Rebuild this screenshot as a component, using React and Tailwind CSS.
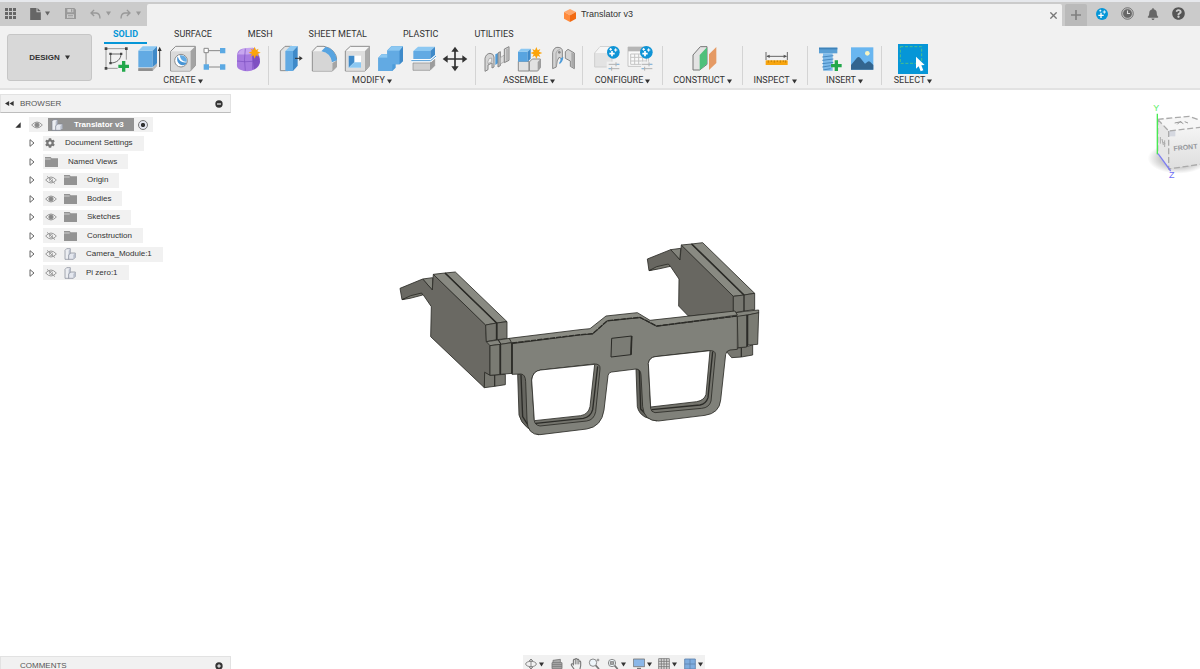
import React, { useState } from "react";
import { FaBell, FaQuestionCircle, FaCog, FaRegHandPaper } from "react-icons/fa";

const tabs = ["SOLID", "SURFACE", "MESH", "SHEET METAL", "PLASTIC", "UTILITIES"];

const Caret = () => (
  <svg viewBox="0 0 10 10" className="w-[5px] h-[5px]" fill="currentColor" aria-hidden="true">
    <path d="M0 1h10L5 9z" />
  </svg>
);

const Icon = ({ children }) => (
  <svg viewBox="0 0 84 84" className="w-7 h-7" fill="none" strokeLinejoin="round">
    {children}
  </svg>
);

const Star = ({ x, y }) => (
  <path
    transform={`translate(${x} ${y})`}
    d="M0-18L4-8 12-12 8-4 18 0 8 4 12 12 4 8 0 18-4 8-12 12-8 4-18 0-8-4-12-12-4-8z"
    fill="#fba40a"
  />
);

const GreenPlus = ({ x, y }) => (
  <path
    transform={`translate(${x} ${y})`}
    d="M-5-16H5V-5H16V5H5V16H-5V5H-16V-5H-5z"
    fill="#22a84b"
  />
);

/* ---------- Create ---------- */
const SketchIcon = () => (
  <Icon>
    <path d="M9 11H70M9 11V70M70 11V44M9 70H44" stroke="#999" strokeWidth="3" />
    <path d="M23 54V27H54C54 42 42 54 23 54z" stroke="#666" strokeWidth="3" />
    <path d="M5 7h8v8H5zM66 7h8v8h-8zM5 66h8v8H5zM19 23h7v7h-7zM51 23h7v7h-7zM19 51h7v7h-7z" fill="#444" />
    <GreenPlus x={62} y={64} />
  </Icon>
);
const ExtrudeIcon = () => (
  <Icon>
    <path d="M7 68L50 68 63 55V64L50 78H7z" fill="#b9b9b9" />
    <path d="M7 70H50V78H7z" fill="#8f8f8f" />
    <path d="M7 17H50V67H7z" fill="#62aae3" />
    <path d="M7 17L20 4H63L50 17z" fill="#8cc8f2" />
    <path d="M50 17L63 4V55L50 67z" fill="#3f8ac9" />
    <path d="M71 66V14" stroke="#444" strokeWidth="3" />
    <path d="M65 18L71 5 77 18z" fill="#333" />
  </Icon>
);
const HoleIcon = () => (
  <Icon>
    <path d="M5 19L20 4H79V62L64 78H5z" fill="#f0f0f0" stroke="#8c8c8c" strokeWidth="3" />
    <path d="M64 19L79 4V62L64 78z" fill="#a3a3a3" />
    <path d="M7 19H64V77H7z" fill="#dadada" />
    <circle cx="36" cy="47" r="19" fill="#fff" stroke="#8c8c8c" strokeWidth="3" />
    <path d="M26 34C20 50 32 64 46 60Q52 58 53 52Q32 56 26 34z" fill="#4794d4" />
    <path d="M32 31C46 28 56 40 53 50Q36 52 32 31z" fill="#62aae3" />
  </Icon>
);
const PatternIcon = () => (
  <Icon>
    <path d="M19 17H54M12 24V60M19 66H54" stroke="#888" strokeWidth="3" />
    <path d="M6 10H19V23H6z" fill="#fff" stroke="#888" strokeWidth="3" />
    <path d="M54 9H70V25H54zM5 58H21V74H5zM54 58H70V74H54z" fill="#5ba9e3" />
  </Icon>
);
const FormIcon = () => (
  <Icon>
    <path d="M6 32Q6 15 22 11L54 8Q72 20 74 40V54Q72 66 60 72Q40 84 16 74Q4 70 6 56z" fill="#a77be0" />
    <path d="M14 18Q30 6 54 9L50 27Q30 30 8 28z" fill="#c7a6ef" />
    <path d="M52 28Q66 26 72 34L75 50Q72 66 56 74z" fill="#7f50c2" />
    <path d="M31 11Q26 44 31 77M6 48Q30 52 53 49L75 42M53 27V74" stroke="#7a4fc0" strokeWidth="2" />
    <Star x={59} y={23} />
  </Icon>
);

/* ---------- Modify ---------- */
const PressPullIcon = () => (
  <Icon>
    <path d="M13 18L27 4H48L36 18V77H13z" fill="#e2e2e2" stroke="#8c8c8c" strokeWidth="3" />
    <path d="M28 18H51V78H28z" fill="#62aae3" />
    <path d="M28 18L43 3H65L51 18z" fill="#8cc8f2" />
    <path d="M51 18L65 3V62L51 78z" fill="#3f8ac9" />
    <path d="M57 40H72" stroke="#333" strokeWidth="3" />
    <path d="M70 33L80 40 70 47z" fill="#333" />
  </Icon>
);
const FilletIcon = () => (
  <Icon>
    <path d="M10 19L24 4H45Q82 12 84 48V64L70 78H10z" fill="#f4f4f4" stroke="#8c8c8c" strokeWidth="3" />
    <path d="M12 19H34Q68 22 70 54V77H12z" fill="#d6d6d6" />
    <path d="M70 54L84 46V64L70 78z" fill="#a5a5a5" />
    <path d="M37 19L50 5Q80 12 84 46L69 52Q65 24 37 19z" fill="#58a4e0" />
  </Icon>
);
const ShellIcon = () => (
  <Icon>
    <path d="M10 18L25 4H83V62L69 78H10z" fill="#f6f6f6" stroke="#8c8c8c" strokeWidth="3" />
    <path d="M69 18L83 4V62L69 78z" fill="#aaa" />
    <path d="M12 18H69V77H12z" fill="#dedede" />
    <path d="M20 32H57V68H20z" fill="#fff" />
    <path d="M20 32H37V52L20 68z" fill="#3f8ac9" />
    <path d="M20 68L37 52H57V68z" fill="#8cc8f2" />
  </Icon>
);
const CombineIcon = () => (
  <Icon>
    <path d="M10 38L20 28H37V16L49 4H84V48L74 58H62V68L52 78H10z" fill="#4d9bd9" />
    <path d="M10 38H37V17H74V58H52V78H10z" fill="#62aae3" />
    <path d="M37 17L49 4H84L74 17zM10 38L20 28H37V38z" fill="#8cc8f2" />
    <path d="M74 17L84 5V48L74 58z" fill="#3f8ac9" />
  </Icon>
);
const SplitIcon = () => (
  <Icon>
    <path d="M15 54H66L80 42V62L66 76H15z" fill="#cfcfcf" stroke="#8c8c8c" strokeWidth="2" />
    <path d="M66 54L80 42V62L66 76z" fill="#9c9c9c" />
    <path d="M16 18L30 5H81L67 18z" fill="#8cc8f2" />
    <path d="M16 18H67V42H16z" fill="#62aae3" />
    <path d="M67 18L81 5V31L67 42z" fill="#3f8ac9" />
    <path d="M10 47H68L84 33" stroke="#fff" strokeWidth="8" />
    <path d="M10 47H68L84 33" stroke="#4a98d5" strokeWidth="3" />
  </Icon>
);
const MoveIcon = () => (
  <Icon>
    <path d="M42 14V70M14 42H70" stroke="#333" strokeWidth="5" />
    <path d="M42 5L53 20H31zM42 79L53 64H31zM5 42L20 31V53zM79 42L64 31V53z" fill="#333" />
  </Icon>
);

/* ---------- Assemble ---------- */
const JointIcon = () => (
  <Icon>
    <path d="M9 40Q12 26 24 25Q35 26 36 36V66L30 69V54L18 60V74L9 79z" fill="#d4d4d4" stroke="#868686" strokeWidth="3" />
    <path d="M18 49Q19 38 29 39V50L18 56z" fill="#f1f1f1" stroke="#999" strokeWidth="2" />
    <path d="M40 28L49 24V54L40 60z" fill="#4d9bd9" />
    <path d="M48 24L55 20V62L48 66z" fill="#bdbdbd" stroke="#868686" strokeWidth="3" />
    <path d="M55 38L67 30V50L55 57z" fill="#dedede" stroke="#999" strokeWidth="2" />
    <path d="M67 12L81 5V46L67 53z" fill="#d4d4d4" stroke="#868686" strokeWidth="3" />
    <path d="M75 11V47" stroke="#a5a5a5" strokeWidth="4" />
  </Icon>
);
const ComponentIcon = () => (
  <Icon>
    <path d="M10 49H42V78H10zM43 51L52 42H76V68L68 78H43z" fill="#e2e2e2" stroke="#8c8c8c" strokeWidth="3" />
    <path d="M68 51L76 43V68L68 77z" fill="#a0a0a0" />
    <path d="M9 20H38V50H9z" fill="#58a4e0" />
    <path d="M9 20L18 11H47L38 20z" fill="#8cc8f2" />
    <path d="M38 20L47 11V41L38 50z" fill="#3f8ac9" />
    <Star x={64} y={24} />
  </Icon>
);
const AsBuiltIcon = () => (
  <Icon>
    <path d="M14 22Q18 6 30 7Q43 8 43 18V42L33 37Q26 44 25 66L14 71z" fill="#d4d4d4" stroke="#868686" strokeWidth="3" />
    <path d="M24 66V24Q27 13 36 14" stroke="#aaa" strokeWidth="3" />
    <circle cx="34" cy="22" r="4" fill="#888" />
    <path d="M34 58Q45 52 46 36L38 40Q38 48 34 52z" fill="#4d9bd9" />
    <path d="M52 20L60 13 79 24V71L67 64V48L52 40z" fill="#d4d4d4" stroke="#868686" strokeWidth="3" />
    <path d="M70 22L78 26V69L70 64z" fill="#aaa" />
  </Icon>
);

/* ---------- Configure / Construct / Inspect / Insert ---------- */
const BlueBadge = () => (
  <g>
    <circle cx="64" cy="22" r="19" fill="#0f94d6" />
    <path d="M60 18V34M52 26H68" stroke="#fff" strokeWidth="5" />
    <path d="M56 9V17M52 13H60M71 10V20M66 15H76" stroke="#fff" strokeWidth="3" />
  </g>
);
const Sliders = () => (
  <g>
    <path d="M50 58H82M50 71H82M72 52V64M59 65V77" stroke="#b0b0b0" strokeWidth="3" />
    <path d="M74 58H82M50 71H57" stroke="#7db9e4" strokeWidth="3" />
  </g>
);
const ConfigureIcon = () => (
  <Icon>
    <path d="M8 24L24 5H60V66H8z" fill="#e3e3e3" stroke="#cfcfcf" strokeWidth="3" />
    <path d="M10 24L24 6H60L46 24z" fill="#f6f6f6" />
    <path d="M44 50H84V80H44z" fill="#f1f1f1" />
    <Sliders />
    <BlueBadge />
  </Icon>
);
const TableIcon = () => (
  <Icon>
    <path d="M9 6H70V64H9z" fill="#fafafa" stroke="#c4c4c4" strokeWidth="3" />
    <path d="M9 6H60V19H9z" fill="#b5b5b5" />
    <path d="M17 27H64V58H17zM17 37H64M17 48H64M29 27V58M41 27V58M53 27V58" stroke="#c4c4c4" strokeWidth="3" />
    <path d="M48 50H84V80H48z" fill="#f1f1f1" />
    <Sliders />
    <BlueBadge />
  </Icon>
);
const PlaneIcon = () => (
  <Icon>
    <path d="M12 30L34 5H54V58L32 75H12z" fill="#e3e3e3" stroke="#777" strokeWidth="3" />
    <path d="M32 30L54 7V56L32 76z" fill="#4fc07b" />
    <path d="M60 28L82 6V54L60 75z" fill="#e59a64" />
  </Icon>
);
const MeasureIcon = () => (
  <Icon>
    <path d="M15 21V45M79 21V45M18 34H76" stroke="#666" strokeWidth="3" />
    <path d="M16 34L26 29V39zM78 34L68 29V39z" fill="#555" />
    <path d="M14 46H80V60H14z" fill="#f8a50f" />
    <path d="M22 46V53M31 46V51M40 46V53M49 46V51M58 46V53M67 46V51M74 46V53" stroke="#a86f00" strokeWidth="2" />
  </Icon>
);
const BoltIcon = () => (
  <Icon>
    <path d="M15 8H70V25H15z" fill="#5a9fd4" />
    <path d="M15 8H70V13H15z" fill="#3f82b8" />
    <path d="M27 25H56V77H32L27 72z" fill="#7dbaea" />
    <path d="M25 36L58 32M25 46L58 42M25 56L58 52M25 66L50 62M27 75L50 71" stroke="#4789c0" strokeWidth="3" />
    <GreenPlus x={67} y={62} />
  </Icon>
);
const ImageIcon = () => (
  <Icon>
    <path d="M12 7H79V74H12z" fill="#69b6f0" />
    <circle cx="61" cy="25" r="7" fill="#f6f3c2" />
    <path d="M12 60L30 38Q35 34 40 39L54 56 62 50Q66 47 70 51L79 60V74H12z" fill="#33658f" />
  </Icon>
);
const SelectIcon = () => (
  <svg viewBox="0 0 90 90" className="w-[30px] h-[30px]">
    <path d="M0 0H90V90H0z" fill="#0696d7" />
    <path d="M7 8H71V58H7z" fill="none" stroke="#4cc08a" strokeWidth="3" strokeDasharray="9 5" />
    <path d="M54 38V74L62 67 68 82 76 79 70 64 80 63z" fill="#fff" />
  </svg>
);

const groups = [
  { label: "CREATE", width: "w-[171px]", icons: [SketchIcon, ExtrudeIcon, HoleIcon, PatternIcon, FormIcon] },
  { label: "MODIFY", width: "w-[207px]", icons: [PressPullIcon, FilletIcon, ShellIcon, CombineIcon, SplitIcon, MoveIcon] },
  { label: "ASSEMBLE", width: "w-[107px]", icons: [JointIcon, ComponentIcon, AsBuiltIcon] },
  { label: "CONFIGURE", width: "w-[80px]", icons: [ConfigureIcon, TableIcon] },
  { label: "CONSTRUCT", width: "w-[80px]", icons: [PlaneIcon] },
  { label: "INSPECT", width: "w-[65px]", icons: [MeasureIcon] },
  { label: "INSERT", width: "w-[74px]", icons: [BoltIcon, ImageIcon] },
  { label: "SELECT", width: "w-[62px]", icons: [SelectIcon] },
];

/* ---------- Browser tree ---------- */
const Eye = ({ off }) => (
  <svg viewBox="0 0 36 24" className="w-3 h-2 shrink-0" fill="none">
    <path d="M2 12Q18-6 34 12Q18 30 2 12z" stroke="#999" strokeWidth="3" />
    <circle cx="18" cy="12" r={off ? 5 : 7} fill={off ? "none" : "#888"} stroke="#999" strokeWidth="2" />
    {off && <path d="M6 1L30 23" stroke="#999" strokeWidth="3" />}
  </svg>
);
const Folder = () => (
  <svg viewBox="0 0 39 30" className="w-[13px] h-[10px] shrink-0" fill="#939393">
    <path d="M0 0H17L20 4H39V30H0z" />
    <path d="M0 6H17" stroke="#f1f1f1" strokeWidth="2" />
  </svg>
);
const Parts = () => (
  <svg viewBox="0 0 36 36" className="w-3 h-3 shrink-0" stroke="#7b8290" strokeWidth="2" strokeLinejoin="round">
    <path d="M3 7L8 2H19V28L14 34H3z" fill="#eceef2" />
    <path d="M14 8L19 3V28L14 33z" fill="#b9bfcc" stroke="none" />
    <path d="M14 21L20 15H34V28L28 34H14z" fill="#e4e7ee" />
    <path d="M28 21L34 15V28L28 34z" fill="#b9bfcc" stroke="none" />
  </svg>
);

const rows = [
  { label: "Document Settings", icon: "gear" },
  { label: "Named Views", icon: "folder" },
  { label: "Origin", icon: "folder", eye: "off" },
  { label: "Bodies", icon: "folder", eye: "on" },
  { label: "Sketches", icon: "folder", eye: "on" },
  { label: "Construction", icon: "folder", eye: "off" },
  { label: "Camera_Module:1", icon: "parts", eye: "off" },
  { label: "Pi zero:1", icon: "parts", eye: "off" },
];

const TreeRow = ({ row }) => (
  <li className="flex items-center h-[15px] pl-[29px]">
    <button aria-label={`Expand ${row.label}`} className="w-[14px] shrink-0">
      <svg viewBox="0 0 18 24" className="w-[6px] h-2" fill="#fff" stroke="#666" strokeWidth="3">
        <path d="M3 2L15 12 3 22z" />
      </svg>
    </button>
    <div className="flex items-center h-[15px] bg-[#f1f1f1] pl-[2px] pr-[11px]">
      {row.eye && (
        <button aria-label={`Toggle ${row.label}`} className="w-[19px] shrink-0">
          <Eye off={row.eye === "off"} />
        </button>
      )}
      {row.icon === "gear" && <FaCog className="w-[10px] h-[10px] text-[#777]" />}
      {row.icon === "folder" && <Folder />}
      {row.icon === "parts" && <Parts />}
      <span className="pl-[10px] whitespace-nowrap">{row.label}</span>
    </div>
  </li>
);

const PanelHeader = ({ title, arrows, children }) => (
  <div className="flex items-center w-[231px] h-[19px] pl-[4px] pr-[7px] bg-[#f1f1f1] border border-[#e2e2e2] border-b-[#bdbdbd] text-[#555]">
    <span className="w-[15px]">
      {arrows && (
        <svg viewBox="0 0 26 14" className="w-[9px] h-[5px]" fill="#333">
          <path d="M12 0V14L0 7zM25 0V14L13 7z" />
        </svg>
      )}
    </span>
    <h2 className="flex-1">{title}</h2>
    {children}
  </div>
);

/* ---------- Viewport drawings ---------- */
const Glasses = () => (
  <svg
    viewBox="0 0 1110 615"
    className="absolute left-[390px] top-[145px] w-[370px] h-[205px]"
    stroke="#2b2b27"
    strokeWidth="2.5"
    strokeLinejoin="round"
    aria-label="Translator v3 model"
  >
    {/* left arm */}
    <path d="M98 132L128 128 127 165z" fill="#84857d" />
    <path d="M30 160L98 132 127 165 130 118 287 270 289 318 300 330V421L284 412 283 458 122 305 124 215 100 180 92 176 36 194z" fill="#6a6963" />
    <path d="M36 194L62 182 95 174 98 180 60 190z" fill="#77776f" />
    <path d="M130 118L165 114 320 264 287 270zM165 114L196 111 351 260 320 264z" fill="#898a82" />
    <path d="M165 114L320 264" strokeWidth="5" />
    <path d="M287 270L320 264V314L289 320zM320 264L351 260V311L320 314z" fill="#777770" />
    <path d="M284 412L300 421 314 420V454L283 458zM314 420L346 418V449L314 454z" fill="#777770" />
    <path d="M289 320L325 315 333 328 300 332zM325 315L358 310 368 322 333 328z" fill="#84857d" />
    <path d="M300 332L331 328V418L300 421zM331 328L366 323V415L331 418z" fill="#7a7b73" />
    <path d="M331 328V418M320 264V314" strokeWidth="5" />

    {/* right arm */}
    <g transform="translate(570 0)">
      <path d="M272 44L302 40 300 75z" fill="#84857d" />
      <path d="M202 72L272 44 300 75 304 30 460 182V232L325 243 296 213 297 132 272 95 265 90 207 107z" fill="#686761" />
      <path d="M207 107L230 95 265 87 271 94 235 102z" fill="#77776f" />
      <path d="M304 30L335 27 492 180 460 184zM335 27L368 23 524 175 492 180z" fill="#898a82" />
      <path d="M335 27L492 180" strokeWidth="5" />
      <path d="M460 184L492 180V228L460 234zM492 180L524 175V224L492 228z" fill="#777770" />
      <path d="M438 348L455 368 484 366V338L455 340zM484 366L518 360V330L484 338z" fill="#777770" />
      <path d="M462 234L495 229 536 225V234L503 240 472 246z" fill="#84857d" />
    </g>

    {/* depth edges behind the frame */}
    <path d="M383 418L387 540Q392 562 412 578L445 600 430 560 410 430 400 416z" fill="#65655f" />
    <path d="M738 402L742 515Q746 535 765 546L800 558 780 520 762 410z" fill="#65655f" />
    <path d="M393 420L398 545L425 588M748 405L752 522L780 550" fill="none" strokeWidth="4" />

    {/* front frame */}
    <path d="M358 310L570 284 600 281 648 243 742 233 780 256 1035 228 1042 240 800 274 750 248 652 258 608 297 366 326z" fill="#8b8c84" />
    <path
      d="M366 326L570 300 608 297 652 258 750 248 800 274 1042 243V343L1020 345Q1008 348 1007 358L992 495Q988 535 945 541L805 558Q762 558 758 515L753 420Q752 402 738 402L665 411Q655 412 654 422L642 525Q635 575 590 582L450 599Q412 600 411 555L407 440Q406 418 393 417L366 418z"
      fill="#80817a"
    />
    <path d="M366 324L570 299 608 296 652 257 750 247 800 273 1040 243" fill="none" strokeWidth="4" strokeDasharray="16 3" />
    <path d="M425 435Q428 408 452 405L612 387Q632 386 630 402L617 530Q612 555 590 558L450 573Q433 570 433 555z" fill="#74746d" />
    <path d="M623 394L608 524Q602 546 580 550L437 565" fill="none" strokeWidth="4" />
    <path d="M425 435Q428 408 452 405L614 388 600 515Q595 538 572 542L433 557z" fill="#fff" />
    <path d="M775 385Q778 368 795 365L955 347Q978 345 976 360L963 498Q958 518 935 520L795 533Q783 531 782 520z" fill="#74746d" />
    <path d="M968 350L954 488Q948 507 930 510L785 524" fill="none" strokeWidth="4" />
    <path d="M775 385Q778 368 795 365L960 347 948 478Q943 496 920 500L782 516z" fill="#fff" />
    <path d="M665 310L725 303 723 359 663 366z" fill="#7b7c75" strokeWidth="3" />
    <path d="M725 303L723 359" fill="none" strokeWidth="5" />
    <path d="M1042 244L1070 240V336L1044 338zM1073 240L1106 233 1103 328 1073 330z" fill="#7a7b73" />
    <path d="M1072 239V334M366 324V416" strokeWidth="5" />
  </svg>
);

const ViewCube = () => (
  <svg viewBox="0 0 180 270" className="absolute right-0 top-[5px] w-[60px] h-[90px]" fill="none">
    <defs>
      <radialGradient id="shade">
        <stop offset="0.6" stopColor="#999" stopOpacity="0.5" />
        <stop offset="1" stopColor="#999" stopOpacity="0" />
      </radialGradient>
      <linearGradient id="face" x2="0" y2="1">
        <stop stopColor="#f4f4f4" />
        <stop offset="1" stopColor="#dedede" />
      </linearGradient>
    </defs>
    <ellipse cx="115" cy="190" rx="92" ry="46" fill="url(#shade)" />
    <path d="M53 73L148 64 180 76V97L86 108z" fill="#f6f6f6" />
    <path d="M53 73L86 108V222L53 178z" fill="#e6e6e6" />
    <path d="M86 108L180 97V208L86 222z" fill="url(#face)" />
    <path d="M86 106H106V124H86z" fill="#d5d8e0" />
    <path d="M53 73L148 64 180 76M53 73L86 108 180 97M86 108V222L180 208M53 73V178" stroke="#aaa" strokeWidth="4" strokeDasharray="18 8" />
    <path d="M104 84L124 80M112 88L120 80 130 86M134 80L144 84" stroke="#999" strokeWidth="3" />
    <path d="M61 126V146M66 132L70 150M74 136V156M68 142L76 146" stroke="#aaa" strokeWidth="3" />
    <path d="M52 56V178" stroke="#48ea52" strokeWidth="4" />
    <path d="M54 176L92 228" stroke="#7d7df0" strokeWidth="4" />
    <text x="101" y="168" transform="rotate(-6 101 168)" fontSize="21" fontWeight="bold" fill="#97999e">FRONT</text>
    <text x="40" y="49" fontSize="27" fill="#5cf066">Y</text>
    <text x="87" y="249" fontSize="27" fill="#6f6ff5">Z</text>
  </svg>
);

/* ---------- Navigation bar ---------- */
const NavIcon = ({ children }) => (
  <svg viewBox="0 0 36 36" className="w-3 h-3" fill="none" stroke="#777" strokeWidth="2.5">
    {children}
  </svg>
);
const navTools = [
  { name: "Orbit", caret: true, art: <><ellipse cx="18" cy="18" rx="16" ry="8" /><path d="M18 3V33M12 9L18 3 24 9M12 27L18 33 24 27" /></> },
  { name: "Look at", art: <path d="M3 14H33V32H3zM6 14V7L28 4V14M3 20H33M3 26H33" fill="#aaa" /> },
  { name: "Pan", hand: true },
  { name: "Zoom", art: <><circle cx="15" cy="14" r="11" fill="#eef6fa" /><path d="M23 22L33 33" strokeWidth="5" /><path d="M30 2V10M26 6H34" /></> },
  { name: "Fit", caret: true, art: <><circle cx="15" cy="15" r="11" fill="#eef6fa" /><path d="M23 23L32 33" strokeWidth="5" /><path d="M10 11H20V19H10z" fill="#aaa" /></> },
  { name: "Display Settings", caret: true, art: <><path d="M1 3H35V26H1z" fill="#8bb7e8" /><path d="M12 32H24" strokeWidth="5" /></> },
  { name: "Grid and Snaps", caret: true, art: <path d="M2 2H34V34H2zM2 10H34M2 18H34M2 26H34M10 2V34M18 2V34M26 2V34" fill="#ddd" /> },
  { name: "Viewports", caret: true, art: <path d="M2 3H34V33H2zM18 3V33M2 18H34" fill="#7faddf" stroke="#5f82ad" /> },
];

const App = () => {
  const [activeTab, setActiveTab] = useState("SOLID");

  return (
    <div className="flex flex-col h-screen overflow-hidden bg-white text-[#333] text-[8px] font-['Liberation_Sans',Arial,sans-serif]">
      {/* Title bar */}
      <header className="flex h-[26px] shrink-0 pt-[2px] bg-[#cbcbcb] border-t-2 border-[#e6e8ec] text-[#666]">
        <div className="flex items-center w-[147px] pl-[5px] pb-[3px]">
          <button aria-label="Data panel" className="mr-[14px]">
            <svg viewBox="0 0 33 33" className="w-[11px] h-[11px]" fill="currentColor">
              <path d="M0 0h9v9H0zM12 0h9v9h-9zM24 0h9v9h-9zM0 12h9v9H0zM12 12h9v9h-9zM24 12h9v9h-9zM0 24h9v9H0zM12 24h9v9h-9zM24 24h9v9h-9z" />
            </svg>
          </button>
          <button aria-label="File" className="flex items-center gap-[4px] mr-[15px]">
            <svg viewBox="0 0 32 36" className="w-[11px] h-3" fill="currentColor">
              <path d="M0 0H19V13H32V36H0zM22 0L32 10H22z" />
            </svg>
            <Caret />
          </button>
          <button aria-label="Save" className="mr-[14px] text-[#999]">
            <svg viewBox="0 0 33 33" className="w-[11px] h-[11px]" fill="currentColor">
              <path d="M0 0H28L33 5V33H0zM7 3V13H25V3zM6 19V30H27V19z" fillRule="evenodd" />
              <path d="M18 4H22V11H18zM9 22H24V24H9zM9 26H24V28H9z" />
            </svg>
          </button>
          <button aria-label="Undo" className="flex items-center gap-[5px] mr-[9px] text-[#999]">
            <svg viewBox="0 0 32 28" className="w-[11px] h-[10px]" fill="none" stroke="currentColor" strokeWidth="4">
              <path d="M12 2L3 11 12 20M3 11H18Q29 12 29 27" />
            </svg>
            <Caret />
          </button>
          <button aria-label="Redo" className="flex items-center gap-[5px] text-[#999]">
            <svg viewBox="0 0 32 28" className="w-[11px] h-[10px]" fill="none" stroke="currentColor" strokeWidth="4">
              <path d="M20 2L29 11 20 20M29 11H14Q3 12 3 27" />
            </svg>
            <Caret />
          </button>
        </div>

        <div className="flex flex-1 items-center pr-[5px] bg-[#f1f1f1] rounded-t-[2px]">
          <h1 className="flex flex-1 items-center justify-center gap-[5px] text-[9px] text-[#333]">
            <svg viewBox="0 0 36 39" className="w-3 h-[13px]">
              <path d="M18 0L36 9 18 19 0 9z" fill="#ffa76b" />
              <path d="M0 9L18 19V39L0 29z" fill="#ff8a3c" />
              <path d="M36 9L18 19V39L36 29z" fill="#f26a12" />
            </svg>
            Translator v3
          </h1>
          <button aria-label="Close document">
            <svg viewBox="0 0 21 21" className="w-[7px] h-[7px]" stroke="#777" strokeWidth="4">
              <path d="M1 1L20 20M20 1L1 20" />
            </svg>
          </button>
        </div>

        <div className="flex items-center w-[138px] pl-[3px]">
          <button aria-label="New design" className="flex items-center justify-center w-[22px] h-[22px] mr-[9px] bg-[#bababa] rounded-t-[2px]">
            <svg viewBox="0 0 30 30" className="w-[10px] h-[10px]" stroke="#808080" strokeWidth="5">
              <path d="M15 0V30M0 15H30" />
            </svg>
          </button>
          <div className="flex items-center gap-[13px] pb-[3px]">
            <button aria-label="Extensions">
              <svg viewBox="0 0 36 36" className="w-[12px] h-[12px]" stroke="#fff">
                <circle cx="18" cy="18" r="18" fill="#0696d7" stroke="none" />
                <path d="M15 14V30M7 22H23" strokeWidth="4" />
                <path d="M25 7V17M20 12H30M13 5V11M10 8H16" strokeWidth="2.5" />
              </svg>
            </button>
            <button aria-label="Job status">
              <svg viewBox="0 0 36 36" className="w-[13px] h-[13px]" fill="none" stroke="#666">
                <circle cx="18" cy="18" r="16" strokeWidth="2.5" />
                <circle cx="18" cy="18" r="12" fill="#666" />
                <path d="M18 10V18H25" stroke="#ddd" strokeWidth="3" />
              </svg>
            </button>
            <button aria-label="Notifications">
              <FaBell className="w-3 h-3" />
            </button>
            <button aria-label="Help">
              <FaQuestionCircle className="w-[13px] h-[13px] text-[#555]" />
            </button>
          </div>
        </div>
      </header>

      {/* Ribbon */}
      <div className="flex h-16 shrink-0 bg-[#f1f1f1] border-b-2 border-[#e2e2e2]">
        <button className="flex items-center justify-center gap-[5px] w-[85px] h-[47px] mt-[8px] ml-[7px] mr-[6px] bg-[#d8d8d8] border border-[#c6c6c6] rounded-[3px] font-bold">
          DESIGN
          <Caret />
        </button>
        <div className="flex-1">
          <nav className="flex gap-[18px] h-[18px] pl-[6px] font-['Roboto',sans-serif] text-[9px]">
            {tabs.map((tab) => (
              <button
                key={tab}
                onClick={() => setActiveTab(tab)}
                className={
                  tab === activeTab
                    ? "px-[9px] pt-[2px] border-b-2 border-[#0696d7] text-[#0696d7] font-bold"
                    : "px-[9px] pt-[2px] border-b-2 border-transparent"
                }
              >
                {tab}
              </button>
            ))}
          </nav>
          <div className="flex">
            {groups.map((group, index) => (
              <div key={group.label} className={`flex shrink-0 ${group.width}`}>
                <div className="flex-1">
                  <div className="flex items-center justify-center gap-[5px] h-[30px]">
                    {group.icons.map((Art, i) => (
                      <button key={i} aria-label={`${group.label} ${i + 1}`}>
                        <Art />
                      </button>
                    ))}
                  </div>
                  <button className="flex items-center justify-center gap-[2px] w-full h-[14px] font-['Roboto',sans-serif] text-[9px]">
                    {group.label}
                    <Caret />
                  </button>
                </div>
                {index < groups.length - 1 && <div className="w-px h-[39px] mt-[2px] bg-[#d4d4d4]" />}
              </div>
            ))}
          </div>
        </div>
      </div>

      {/* Workspace */}
      <main className="relative flex-1 pt-[4px]">
        <Glasses />
        <ViewCube />
        <PanelHeader title="BROWSER" arrows>
          <button aria-label="Panel options">
            <svg viewBox="0 0 24 24" className="w-2 h-2">
              <circle cx="12" cy="12" r="11" fill="#333" />
              <path d="M6 12H18" stroke="#ddd" strokeWidth="4" />
            </svg>
          </button>
        </PanelHeader>
        <ul className="flex flex-col justify-between h-[163px] mt-[4px]">
          <li className="flex items-center h-[15px] pl-[15px]">
            <button aria-label="Collapse Translator v3" className="w-[14px]">
              <svg viewBox="0 0 18 18" className="w-[6px] h-[6px]">
                <path d="M17 1V17H1z" fill="#333" />
              </svg>
            </button>
            <div className="flex items-center h-[15px] pl-[2px] pr-[5px] bg-[#f1f1f1]">
              <button aria-label="Toggle Translator v3" className="w-[17px]">
                <Eye />
              </button>
              <div className="flex items-center gap-[11px] h-[13px] pl-[3px] pr-[10px] bg-[#939393] text-white font-bold">
                <Parts />
                Translator v3
              </div>
              <input
                type="radio"
                aria-label="Activate Translator v3"
                defaultChecked
                className="appearance-none w-[10px] h-[10px] ml-[4px] rounded-full border border-[#777] bg-[#f4f4f8] checked:bg-[radial-gradient(circle,#333_30%,#e4e6f0_45%)]"
              />
            </div>
          </li>
          {rows.map((row) => (
            <TreeRow key={row.label} row={row} />
          ))}
        </ul>
      </main>

      {/* Comments + navigation bar */}
      <footer className="grid grid-cols-[37fr_182px_35fr] items-start h-[14px] shrink-0 overflow-hidden">
        <div className="pt-px">
          <PanelHeader title="COMMENTS">
            <button aria-label="Add comment">
              <svg viewBox="0 0 24 24" className="w-2 h-2">
                <circle cx="12" cy="12" r="11" fill="#333" />
                <path d="M7 12H17M12 7V17" stroke="#ddd" strokeWidth="4" />
              </svg>
            </button>
          </PanelHeader>
        </div>
        <div className="flex items-center justify-between h-[18px] px-[2px] bg-[#f1f1f1]">
          {navTools.map((tool) => (
            <button key={tool.name} aria-label={tool.name} className="flex items-center gap-[2px]">
              {tool.hand ? <FaRegHandPaper className="w-3 h-3 text-[#777]" /> : <NavIcon>{tool.art}</NavIcon>}
              {tool.caret && <Caret />}
            </button>
          ))}
        </div>
      </footer>
    </div>
  );
};

export default App;
